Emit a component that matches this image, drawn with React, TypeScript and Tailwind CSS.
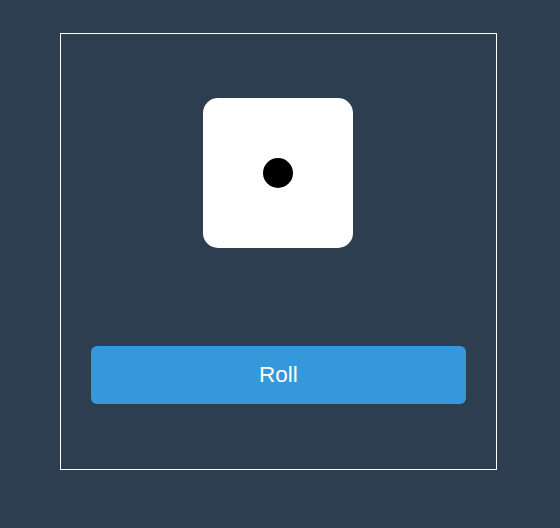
import React, { useState } from 'react';

const pips: Record<number, [number, number][]> = {
  1: [[50, 50]],
  2: [[25, 25], [75, 75]],
  3: [[25, 25], [50, 50], [75, 75]],
  4: [[25, 25], [75, 25], [25, 75], [75, 75]],
  5: [[25, 25], [75, 25], [50, 50], [25, 75], [75, 75]],
  6: [[25, 25], [75, 25], [25, 50], [75, 50], [25, 75], [75, 75]],
};

const Die = ({ value }: { value: number }) => (
  <div className="relative w-[150px] h-[150px] mr-px bg-white rounded-[15px]">
    {pips[value].map(([x, y], i) => (
      <span
        key={i}
        className="absolute w-[30px] h-[30px] -ml-[15px] -mt-[15px] rounded-full bg-black"
        style={{ left: `${x}%`, top: `${y}%` }}
      />
    ))}
  </div>
);

const App = () => {
  const [value, setValue] = useState(1);

  return (
    <div className="min-h-[528px] bg-[#2c3e50] pt-[33px] pl-[60px]" style={{ fontFamily: '"Liberation Sans", Arial, sans-serif' }}>
      <div className="w-[437px] h-[437px] border border-white flex flex-col items-center px-[30px] pt-[64px]">
        <Die value={value} />
        <button
          onClick={() => setValue(Math.floor(Math.random() * 6) + 1)}
          className="mt-[98px] w-full h-[58px] pb-px rounded-[6px] bg-[#3498db] text-white text-[22.5px]"
        >
          Roll
        </button>
      </div>
    </div>
  );
};

export default App;
